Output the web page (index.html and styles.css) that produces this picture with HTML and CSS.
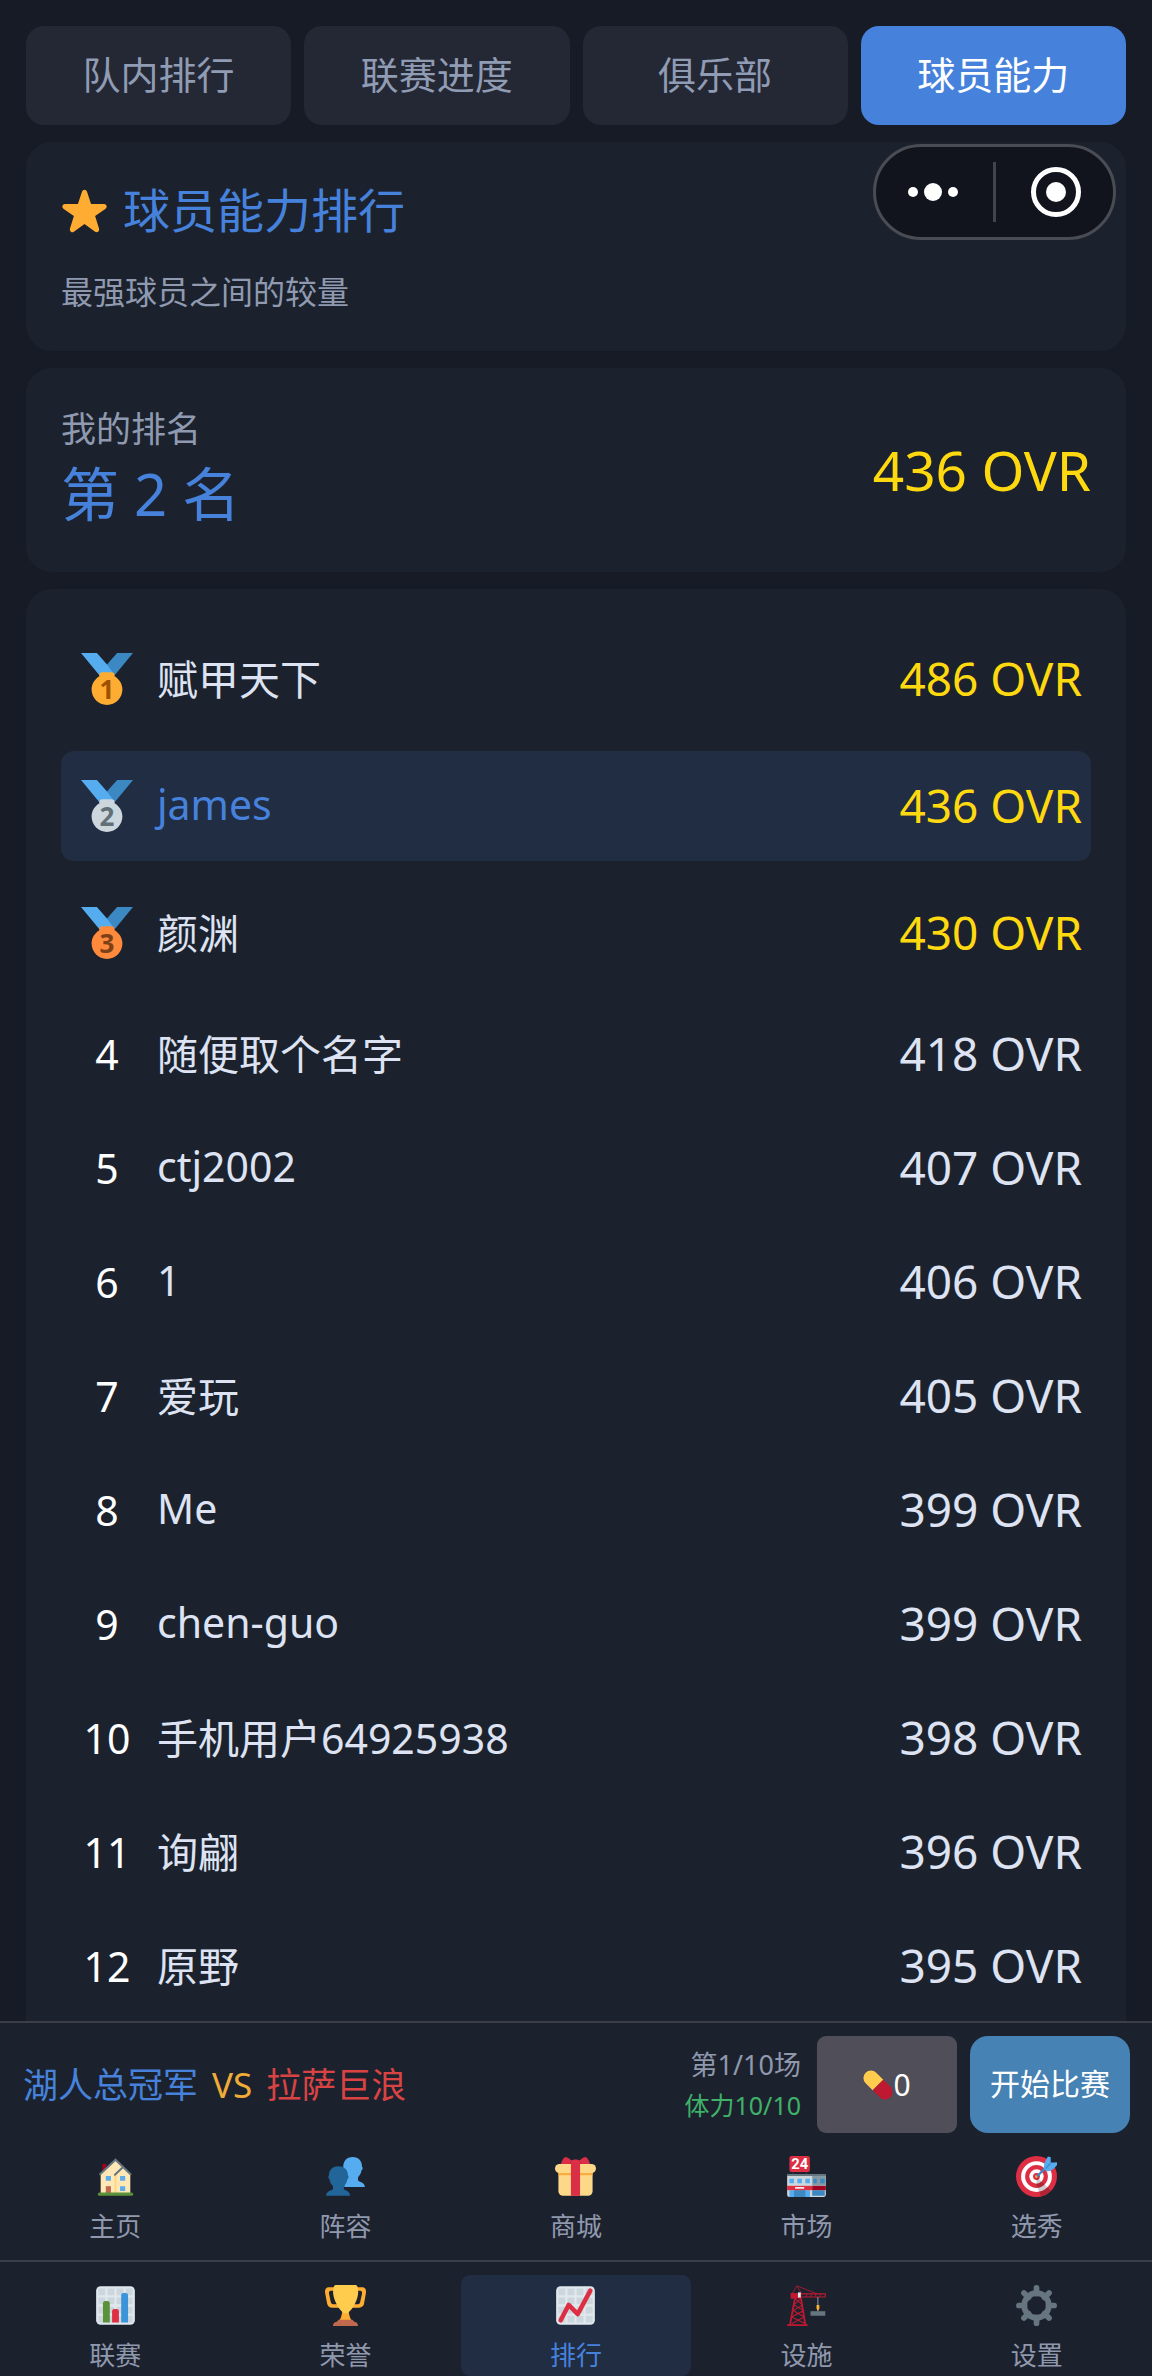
FILE: index.html
```html
<!DOCTYPE html>
<html lang="zh-CN">
<head>
<meta charset="utf-8">
<meta name="viewport" content="width=device-width, initial-scale=1">
<title>球员能力排行</title>
<link rel="stylesheet" href="styles.css">
</head>
<body>
<div class="app">
  <main class="content">
    <div class="tabs">
      <button class="tab" type="button">队内排行</button>
      <button class="tab" type="button">联赛进度</button>
      <button class="tab" type="button">俱乐部</button>
      <button class="tab tab-active" type="button">球员能力</button>
    </div>

    <section class="card">
      <h1 class="title">
        <svg class="star" viewBox="0 0 36 36" aria-hidden="true"><path fill="#FFAC33" d="M27.287 34.627c-.404 0-.806-.124-1.152-.371L18 28.422l-8.135 5.834a1.97 1.97 0 0 1-2.312-.008 1.971 1.971 0 0 1-.721-2.194l3.034-9.792-8.062-5.681a1.98 1.98 0 0 1-.708-2.203 1.978 1.978 0 0 1 1.866-1.363L12.947 13l3.179-9.549a1.976 1.976 0 0 1 3.749 0L23 13l10.036.015a1.975 1.975 0 0 1 1.159 3.566l-8.062 5.681 3.034 9.792a1.97 1.97 0 0 1-.72 2.194 1.957 1.957 0 0 1-1.16.379z"/></svg>
        <span>球员能力排行</span>
      </h1>
      <p class="subtitle">最强球员之间的较量</p>
    </section>

    <section class="card mine">
      <div>
        <p class="mine-label">我的排名</p>
        <p class="mine-rank">第 2 名</p>
      </div>
      <p class="mine-score">436 OVR</p>
    </section>

    <section class="card">
      <ol class="list">
        <li class="row row-medal">
          <span class="rank"><svg class="medal" viewBox="0 0 36 36"><path fill="#55ACEE" d="M18 8l-7-8H0l14 17 11.521-4.75z"/><path fill="#3B88C3" d="M25 0l-7 8 5.39 7.312 1.227-1.489L36 0z"/><path fill="#FFAC33" d="M23.205 16.026c.08-.217.131-.448.131-.693 0-1.104-.896-2-2-2h-6.667c-1.104 0-2 .896-2 2 0 .245.05.476.131.693-3.258 1.826-5.464 5.307-5.464 9.307C7.336 31.224 12.111 36 18.002 36s10.667-4.776 10.667-10.667c0-4-2.206-7.481-5.464-9.307z"/><text class="medal-digit" x="18" y="32" fill="#9E5200">1</text></svg></span>
          <span class="name">赋甲天下</span><span class="score gold">486 OVR</span>
        </li>
        <li class="row row-medal row-me">
          <span class="rank"><svg class="medal" viewBox="0 0 36 36"><path fill="#55ACEE" d="M18 8l-7-8H0l14 17 11.521-4.75z"/><path fill="#3B88C3" d="M25 0l-7 8 5.39 7.312 1.227-1.489L36 0z"/><path fill="#CCD6DD" d="M23.205 16.026c.08-.217.131-.448.131-.693 0-1.104-.896-2-2-2h-6.667c-1.104 0-2 .896-2 2 0 .245.05.476.131.693-3.258 1.826-5.464 5.307-5.464 9.307C7.336 31.224 12.111 36 18.002 36s10.667-4.776 10.667-10.667c0-4-2.206-7.481-5.464-9.307z"/><text class="medal-digit" x="18" y="32" fill="#627077">2</text></svg></span>
          <span class="name">james</span><span class="score gold">436 OVR</span>
        </li>
        <li class="row row-medal">
          <span class="rank"><svg class="medal" viewBox="0 0 36 36"><path fill="#55ACEE" d="M18 8l-7-8H0l14 17 11.521-4.75z"/><path fill="#3B88C3" d="M25 0l-7 8 5.39 7.312 1.227-1.489L36 0z"/><path fill="#FF8A3B" d="M23.205 16.026c.08-.217.131-.448.131-.693 0-1.104-.896-2-2-2h-6.667c-1.104 0-2 .896-2 2 0 .245.05.476.131.693-3.258 1.826-5.464 5.307-5.464 9.307C7.336 31.224 12.111 36 18.002 36s10.667-4.776 10.667-10.667c0-4-2.206-7.481-5.464-9.307z"/><text class="medal-digit" x="18" y="32" fill="#7C4119">3</text></svg></span>
          <span class="name">颜渊</span><span class="score gold">430 OVR</span>
        </li>
        <li class="row"><span class="rank">4</span><span class="name">随便取个名字</span><span class="score">418 OVR</span></li>
        <li class="row"><span class="rank">5</span><span class="name">ctj2002</span><span class="score">407 OVR</span></li>
        <li class="row"><span class="rank">6</span><span class="name">1</span><span class="score">406 OVR</span></li>
        <li class="row"><span class="rank">7</span><span class="name">爱玩</span><span class="score">405 OVR</span></li>
        <li class="row"><span class="rank">8</span><span class="name">Me</span><span class="score">399 OVR</span></li>
        <li class="row"><span class="rank">9</span><span class="name">chen-guo</span><span class="score">399 OVR</span></li>
        <li class="row"><span class="rank">10</span><span class="name">手机用户64925938</span><span class="score">398 OVR</span></li>
        <li class="row"><span class="rank">11</span><span class="name">询翩</span><span class="score">396 OVR</span></li>
        <li class="row"><span class="rank">12</span><span class="name">原野</span><span class="score">395 OVR</span></li>
      </ol>
    </section>
  </main>

  <footer class="bottom">
    <div class="match">
      <p class="teams"><span class="home">湖人总冠军</span><span class="vs">VS</span><span class="away">拉萨巨浪</span></p>
      <div class="status"><span>第1/10场</span><span class="stamina">体力10/10</span></div>
      <button class="pill-btn" type="button">
        <svg class="pill" viewBox="0 0 30 30" aria-hidden="true"><g transform="rotate(45 15 15)"><path fill="#FFCC4D" d="M15 7.500H5a7.500 7.500 0 0 0 0 15H15z"/><path fill="#BE1931" d="M15 7.500h10a7.500 7.500 0 0 1 0 15H15z"/></g></svg><span>0</span>
      </button>
      <button class="start-btn" type="button">开始比赛</button>
    </div>

    <nav class="nav">
      <a class="nav-item" href="#home">
        <svg class="icon" viewBox="0 0 36 36" aria-hidden="true"><path fill="#A0041E" d="M6.500 7H10v8H6.500z"/><path fill="#FFE8B6" d="M5 16 18 3.500 31 16v17H5z"/><path fill="#FFD983" d="M17 17h2v16h-2z"/><path fill="none" stroke="#66757F" stroke-width="1.800" stroke-linecap="round" d="M4.500 16 18 3.300 31.200 16M17.500 16.500 24 10.300"/><path fill="#5DADEC" d="M9.500 17.500H14v4.300H9.500zM22 17.500h4.500v4.300H22zM22 26.500h4.500v4.300H22z"/><path fill="#C1694F" d="M9.500 26.500H14v6H9.500z"/><rect fill="#5C913B" x="2.500" y="32" width="31" height="3" rx="1.500"/></svg>
        <span>主页</span>
      </a>
      <a class="nav-item" href="#squad">
        <svg class="icon" viewBox="0 0 36 36" aria-hidden="true"><path fill="#55ACEE" d="M16 10c0-6 3-9.200 8.200-9.200 5.400 0 8.400 3.500 8.300 8.600.8.200.8 2.600-.4 3.200-.4 2.800-1.600 4.600-3.100 6v2.800c1 1.700 6 1.900 6 5.800H17z"/><path fill="#226699" d="M3.500 17c0-5 3.200-8 8.300-8s8.400 3 8.300 8c.9.300.7 3-.4 3.500-.4 2.600-1.600 4.600-3.100 6v2.600c1.600 1.300 5.400 1.700 5.400 5.900H1c0-4.200 4.200-4.600 6-5.900v-2.600c-1.500-1.400-2.700-3.400-3.100-6-1.100-.5-1.300-3.200-.4-3.500z"/></svg>
        <span>阵容</span>
      </a>
      <a class="nav-item" href="#shop">
        <svg class="icon" viewBox="0 0 36 36" aria-hidden="true"><path fill="#FDD888" d="M3 13h30v18a4 4 0 0 1-4 4H7a4 4 0 0 1-4-4z"/><path fill="#FCAB40" d="M3 14.500h30V17H3z"/><rect fill="#FDD888" y="7" width="36" height="8" rx="4"/><path fill="#DA2F47" d="M14 7h8v28h-8z"/><path fill="#DA2F47" d="M5 7c1-2 2-5.500 4-6 2-.3 4 2 5.500 3 1.500-1.200 5.500-1.200 7 0 1.500-1 3.500-3.300 5.500-3 2 .5 3 4 4 6z"/><path fill="#BE1931" d="M14 5 13 7h1zM22 5l1 2h-1z"/></svg>
        <span>商城</span>
      </a>
      <a class="nav-item" href="#market">
        <svg class="icon" viewBox="0 0 36 36" aria-hidden="true"><path stroke="#31373D" stroke-width="1" d="M6 13v4M18 13v4"/><rect fill="#DD2E44" x="3" width="18" height="14" rx="2"/><text class="store-digit" x="12" y="11.500">24</text><path fill="#CCD6DD" d="M1 17h34v17a2 2 0 0 1-2 2H3a2 2 0 0 1-2-2z"/><path fill="#8899A6" d="M23 17h12v9H23z"/><path fill="#66757F" d="M1 15.800h34v1.800H1z"/><path fill="#55ACEE" d="M3 20h4v4H3zM10 20h4v4h-4zM17 20h4v4h-4zM3 30h18v6H3z"/><path fill="#3B88C3" d="M24 20h3v4h-3zM30 20h4v4h-4zM7 30h10v6H7zM23 30h11v5H23z"/><path fill="#DD2E44" d="M1 26.200h22V30H1z"/><path fill="#A0041E" d="M23 26.200h12V30H23z"/><path fill="#FFF" d="M8 27.300h8v1.400H8z"/></svg>
        <span>市场</span>
      </a>
      <a class="nav-item" href="#draft">
        <svg class="icon" viewBox="0 0 36 36" aria-hidden="true"><circle fill="#DD2E44" cx="18" cy="18" r="18"/><circle fill="#FFF" cx="18" cy="18" r="13.500"/><circle fill="#DD2E44" cx="18" cy="18" r="10"/><circle fill="#FFF" cx="18" cy="18" r="6.300"/><circle fill="#DD2E44" cx="18" cy="18" r="3"/><path opacity=".2" d="m18.200 18.300 12.500 12.200A18 18 0 0 1 22 35.500L17.800 25z"/><circle fill="#FFAC33" cx="18" cy="18" r="1.300"/><path fill="none" stroke="#3B88C3" stroke-width="2" d="M18.500 18 30 6"/><path fill="#55ACEE" d="M24.500 11.500c-.5-3 .5-6.500 3.500-11l2.500.500V6l5.500-.500V8c-3 4-5.500 5.500-9 5.500z"/><path stroke="#3B88C3" d="m26 11 5-5.500"/></svg>
        <span>选秀</span>
      </a>
    </nav>

    <nav class="nav">
      <a class="nav-item" href="#league">
        <svg class="icon" viewBox="0 0 36 36" aria-hidden="true"><rect fill="#E1E8ED" x="1" y="1" width="34" height="34" rx="4"/><path stroke="#CCD6DD" stroke-width="6" stroke-dasharray="6 2" d="M3 6h30M3 14h30M3 22h30M3 30h30"/><path fill="#5C913B" d="M7 33V16a2 2 0 0 1 2-2h2a2 2 0 0 1 2 2v17z"/><path fill="#DD2E44" d="M15 33V23a2 2 0 0 1 2-2h2a2 2 0 0 1 2 2v10z"/><path fill="#3B94D9" d="M23 33V9a2 2 0 0 1 2-2h2a2 2 0 0 1 2 2v24z"/></svg>
        <span>联赛</span>
      </a>
      <a class="nav-item" href="#honor">
        <svg class="icon" viewBox="0 0 36 36" aria-hidden="true"><path fill="#FFAC33" d="M5.123 5h6C12.227 5 13 4.896 13 6V4c0-1.104-.773-2-1.877-2h-8c-2 0-3.583 2.125-3 5 0 0 1.791 9.375 1.917 9.958C2.373 18.500 4.164 20 6.081 20h6.958c1.105 0-.039-1.896-.039-3v-2c0 1.104-.773 2-1.877 2h-4c-1.104 0-1.833-1.042-2-2S3.539 7.667 3.539 7.667C3.206 5.750 4.018 5 5.123 5zm25.812 0h-6C23.831 5 22 4.896 22 6V4c0-1.104 1.831-2 2.935-2h8c2 0 3.584 2.125 3 5 0 0-1.633 9.419-1.771 10-.354 1.500-2.042 3-4 3h-7.146C21.914 20 22 18.104 22 17v-2c0 1.104 1.831 2 2.935 2h4c1.104 0 1.834-1.042 2-2s1.584-7.333 1.584-7.333C32.851 5.750 32.040 5 30.935 5zM20.832 22c0-6.958-2.709 0-2.709 0s-3-6.958-3 0-3.291 10-3.291 10h12.292s-3.292-3.042-3.292-10z"/><path fill="#FFCC4D" d="M29.123 6.577c0 6.775-6.770 18.423-11 18.423s-11-11.649-11-18.423C7.123.795 8.125 0 10.123 0h15.999c2 0 3.001.900 3.001 6.577z"/><path fill="#C1694F" d="M12 30.500h12l2 2c2 0 3 1.500 3 3.500H7c0-2 1-3.500 3-3.500z"/></svg>
        <span>荣誉</span>
      </a>
      <a class="nav-item nav-active" href="#ranking" aria-current="page">
        <svg class="icon" viewBox="0 0 36 36" aria-hidden="true"><rect fill="#E1E8ED" x="1" y="1" width="34" height="34" rx="4"/><path stroke="#CCD6DD" stroke-width="6" stroke-dasharray="6 2" d="M3 6h30M3 14h30M3 22h30M3 30h30"/><path fill="none" stroke="#DD2E44" stroke-width="4" stroke-linecap="round" stroke-linejoin="round" d="m5 31 7-13.500 8 8L31 5"/></svg>
        <span>排行</span>
      </a>
      <a class="nav-item" href="#facility">
        <svg class="icon" viewBox="0 0 36 36" aria-hidden="true"><g fill="none" stroke="#BE1931"><path stroke-width="1.600" d="M8 11 3.500 35M13 11l4 24M1 35.200h18"/><path stroke-width="1" d="m8 12 6.500 5.500-8 5 9.500 5.500-11 6M13 12l-6 5.500 8.500 5L5 28l12 6"/><path stroke-width=".700" d="M5 8 9.500.800 28 8M9.500.800 14 8M18 7.500v3M22 7.500v3M26 7.500v3M30 7.500v3"/><path stroke-width="1" d="M13 7.800h21.500v2.700H13z"/></g><path fill="#BE1931" d="M4 7h9v5H4z"/><path fill="#E1E8ED" d="M10.500 6.500H13V11h-2.500z"/><path stroke="#99AAB5" stroke-width=".800" d="M28 10.500V23"/><path fill="#FFAC33" d="M26.800 17.500h2.500v3l-1.300 2.500-1.200-2.500z"/><path fill="#66757F" d="M21.500 23h13v4h-13z"/></svg>
        <span>设施</span>
      </a>
      <a class="nav-item" href="#settings">
        <svg class="icon" viewBox="0 0 36 36" aria-hidden="true"><g stroke="#66757F" stroke-width="5" stroke-linecap="round"><path d="M18 2.500v5M18 28.500v5M2.500 18h5M28.500 18h5M7 7l4 4M25 25l4 4M7 29l4-4M25 11l4-4"/><circle fill="none" cx="18" cy="18" r="10.800"/></g></svg>
        <span>设置</span>
      </a>
    </nav>
  </footer>

  <div class="capsule">
    <button class="capsule-btn" type="button" aria-label="更多">
      <svg class="dots" viewBox="0 0 52 20"><circle cx="6" cy="10" r="5"/><circle cx="26" cy="10" r="9"/><circle cx="46" cy="10" r="5"/></svg>
    </button>
    <button class="capsule-btn" type="button" aria-label="关闭">
      <svg class="ring" viewBox="0 0 50 50"><circle cx="25" cy="25" r="22.500" fill="none" stroke="#fff" stroke-width="5"/><circle cx="25" cy="25" r="10"/></svg>
    </button>
  </div>
</div>
</body>
</html>
```
FILE: styles.css
```css
* {
  box-sizing: border-box;
  margin: 0;
  padding: 0;
}

body {
  background: #171b25;
  color: #dde3f2;
  font-family: "Noto Sans", "Noto Sans CJK SC", sans-serif;
  font-weight: 400;
}

button {
  border: 0;
  font: inherit;
  color: inherit;
}

svg {
  display: block;
  overflow: visible;
}

.app {
  position: relative;
  display: flex;
  flex-direction: column;
  height: 100vh;
}

.content {
  flex: 1;
  min-height: 0;
  padding: 26px 26px 0;
  display: flex;
  flex-direction: column;
  gap: 17px;
  overflow-y: auto;
  scrollbar-width: none;
}

.tabs {
  display: grid;
  grid-template-columns: repeat(4, 1fr);
  gap: 13px;
}

.tab {
  height: 99px;
  padding-bottom: 6px;
  border-radius: 18px;
  background: #242834;
  color: #909bb4;
  font-size: 38px;
}

.tab-active {
  background: #4682dc;
  color: #fff;
}

.card {
  flex: none;
  padding: 35px;
  border-radius: 26px;
  background: #1c222d;
}

.title {
  display: flex;
  align-items: center;
  gap: 15px;
  margin-bottom: 25px;
  color: #4682dc;
  font-size: 47px;
  font-weight: 400;
  line-height: 66px;
}

.star {
  width: 47px;
  height: 47px;
}

.subtitle {
  color: #8f9ab0;
  font-size: 32px;
  line-height: 48px;
}

.mine {
  display: flex;
  align-items: center;
  justify-content: space-between;
}

.mine-label {
  color: #8f9ab0;
  font-size: 35px;
  line-height: 52px;
}

.mine-rank {
  padding-bottom: 4px;
  color: #4682dc;
  font-size: 58px;
  line-height: 78px;
}

.mine-score {
  color: #ffd90f;
  font-size: 55px;
  line-height: 82px;
}

.list {
  list-style: none;
  display: flex;
  flex-direction: column;
  gap: 17px;
}

.row {
  display: flex;
  align-items: center;
  gap: 13px;
  height: 97px;
  padding: 0 9px;
  border-radius: 13px;
  font-size: 41px;
}

.row-medal {
  height: 110px;
}

.row-me {
  background: #212d43;
}

.row-me .name {
  color: #4682dc;
}

.rank {
  width: 74px;
  color: #fff;
  text-align: center;
}

.medal {
  width: 52px;
  height: 52px;
  margin: 0 auto;
}

.medal-digit {
  font: bold 18px "Open Sans", "Noto Sans", sans-serif;
  text-anchor: middle;
}

.name {
  flex: 1;
  padding-bottom: 4px;
}

.score {
  padding-bottom: 2px;
  font-size: 46px;
}

.gold {
  color: #ffd90f;
}

.bottom {
  background: #1c222d;
  border-top: 2px solid #3b3e47;
}

.match {
  display: flex;
  align-items: center;
  padding: 13px 22px 0 23px;
}

.teams {
  flex: 1;
  display: flex;
  gap: 14px;
  font-size: 35px;
  line-height: 52px;
}

.home {
  color: #4682dc;
}

.vs {
  color: #f0ac37;
}

.away {
  color: #d94343;
}

.status {
  display: flex;
  flex-direction: column;
  align-items: flex-end;
  margin-right: 16px;
  color: #9098ae;
  font-size: 27px;
  line-height: 40px;
}

.stamina {
  color: #3fb168;
  font-size: 25px;
}

.pill-btn {
  display: flex;
  align-items: center;
  justify-content: center;
  width: 140px;
  height: 97px;
  margin-right: 13px;
  border-radius: 9px;
  background: #504f59;
  color: #fff;
  font-size: 30px;
}

.pill {
  width: 30px;
  height: 30px;
}

.start-btn {
  width: 160px;
  height: 97px;
  padding-bottom: 5px;
  border-radius: 18px;
  background: #4682b4;
  color: #fff;
  font-size: 30px;
}

.nav {
  display: grid;
  grid-template-columns: repeat(5, 1fr);
  padding-top: 13px;
}

.nav + .nav {
  margin-top: 13px;
  border-top: 2px solid #3b3e47;
}

.nav-item {
  display: flex;
  flex-direction: column;
  align-items: center;
  gap: 14px;
  padding: 10px 0 6px;
  border-radius: 9px;
  color: #9098ae;
  font-size: 26px;
  line-height: 30px;
  text-decoration: none;
}

.nav-active {
  background: #212d43;
  color: #4682dc;
}

.icon {
  width: 41px;
  height: 41px;
}

.store-digit {
  fill: #fff;
  font: bold 13px Roboto, sans-serif;
  text-anchor: middle;
}

.capsule {
  position: absolute;
  top: 144px;
  right: 36px;
  display: flex;
  width: 243px;
  height: 96px;
  padding: 15px 0;
  border: 3px solid #4a4c54;
  border-radius: 48px;
  background: #11141c;
}

.capsule-btn {
  flex: 1;
  display: flex;
  align-items: center;
  justify-content: center;
  padding-right: 3px;
  background: none;
  fill: #fff;
}

.capsule-btn + .capsule-btn {
  padding: 0 0 0 3px;
  border-left: 3px solid #42444c;
}

.dots {
  width: 52px;
  height: 20px;
}

.ring {
  width: 50px;
  height: 50px;
}
```
